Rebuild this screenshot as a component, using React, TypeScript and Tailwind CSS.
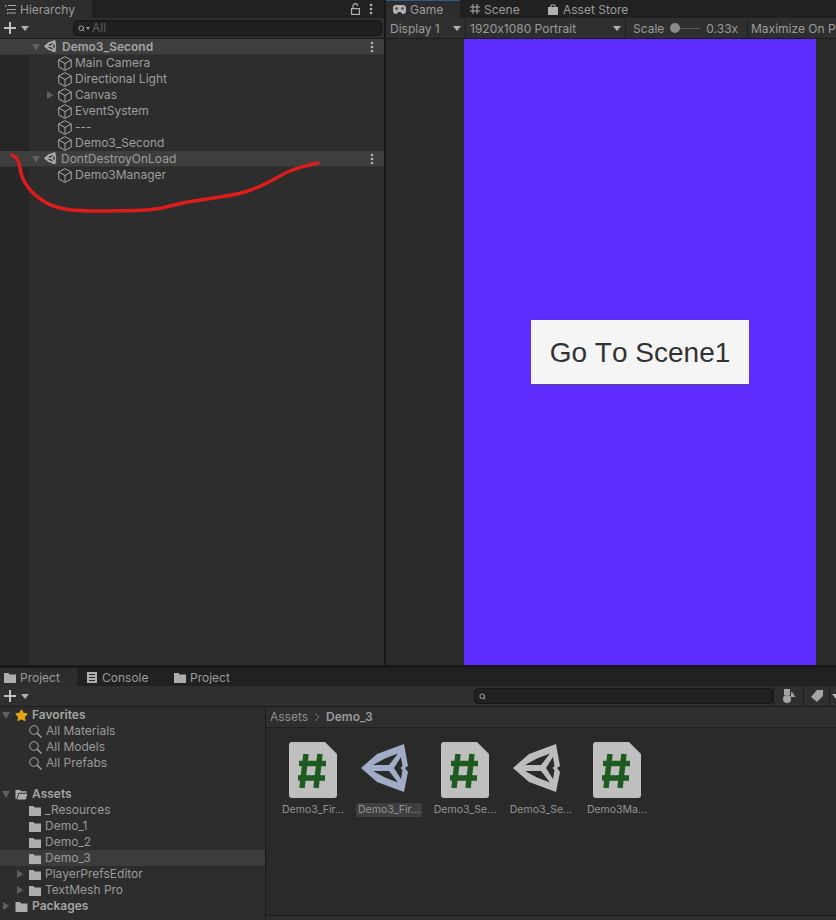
import { Search, Star } from 'lucide-react';

function Caret({ dir = 'down', className = '' }: { dir?: 'down' | 'right'; className?: string }) {
  return (
    <svg width="10" height="10" viewBox="0 0 10 10" className={`shrink-0 ${className}`}>
      {dir === 'down' ? <path d="M1 2h8L5 9z" fill="#5f5f5f" /> : <path d="M2 1l6.5 4L2 9z" fill="#5f5f5f" />}
    </svg>
  );
}

function DropArrow({ className = '' }: { className?: string }) {
  return (
    <svg width="8" height="5" viewBox="0 0 8 5" className={`shrink-0 ${className}`}>
      <path d="M0 0h8L4 5z" fill="#b0b0b0" />
    </svg>
  );
}

function Cube() {
  return (
    <svg width="14" height="15" viewBox="0 0 14 15" fill="none" stroke="#a6a6a6" strokeWidth="1" className="shrink-0">
      <path d="M7 .7l6.300 3.300v7L7 14.300.7 11V4zM.7 4L7 7.500 13.300 4M7 7.500v6.800" />
    </svg>
  );
}

function UnityLogo({ size, color }: { size: number; color: string }) {
  return (
    <svg width={size} height={(size * 48) / 50} viewBox="0 0 50 48" className="shrink-0">
      <path
        fillRule="evenodd"
        fill={color}
        d="M0 24L16 10 43 0l4 22-3 2 3 4-4 20-27-10zM12 21h16l9-11.500-13 5zM40 13l-7 11 7 11 1.500-9-2-2 2-2zM12 27l12 6.500 13 5L28 27z"
      />
    </svg>
  );
}

function Kebab() {
  return (
    <svg width="4" height="12" viewBox="0 0 4 12" fill="#b0b0b0" className="shrink-0">
      <circle cx="2" cy="2" r="1.3" />
      <circle cx="2" cy="6" r="1.3" />
      <circle cx="2" cy="10" r="1.3" />
    </svg>
  );
}

function Folder({ open = false, w = 12 }: { open?: boolean; w?: number }) {
  return (
    <svg width={w} height="11" viewBox="0 0 12 11" className="shrink-0">
      {open ? (
        <path d="M0 1h4.500l1 1.300H11v1.500H3L1 10H0zM3.600 4.800H12L10.300 10.500H1.600z" fill="#adadad" />
      ) : (
        <path d="M0 1h4.500l1.200 1.500H12V11H0z" fill="#adadad" />
      )}
    </svg>
  );
}

function Glass() {
  return (
    <svg width="13" height="13" viewBox="0 0 13 13" fill="none" stroke="#a8a8a8" className="shrink-0">
      <circle cx="5" cy="5" r="4.300" />
      <path d="M8 8l4.500 4.500" strokeWidth="1.300" />
    </svg>
  );
}

function PlusMenu() {
  return (
    <div className="flex items-center pl-1 gap-[5px]">
      <svg width="12" height="12" viewBox="0 0 12 12" fill="#c0c0c0">
        <path d="M5 0h2v5h5v2H7v5H5V7H0V5h5z" />
      </svg>
      <DropArrow />
    </div>
  );
}

function SearchField({
  children,
  className = '',
  menu = false,
}: {
  children?: React.ReactNode;
  className?: string;
  menu?: boolean;
}) {
  return (
    <div className={`h-[16px] rounded-[4px] bg-[#202020] border border-[#161616] flex items-center ${className}`}>
      <Search size={7} strokeWidth={3} color="#b4b4b4" className="ml-[4px]" />
      {menu && (
        <svg width="4" height="3" viewBox="0 0 4 3" className="ml-[1px]">
          <path d="M0 0h4L2 3z" fill="#9a9a9a" />
        </svg>
      )}
      {children}
    </div>
  );
}

function SceneRow({ name, bold = false }: { name: string; bold?: boolean }) {
  return (
    <div className="h-[16px] bg-[#3e3e3e] flex items-center pl-[31px] pr-[10px] border-b border-[#333]">
      <Caret />
      <span className="ml-[3px]">
        <UnityLogo size={13} color="#b0b0b0" />
      </span>
      <span className={`${bold ? 'ml-[5px] font-semibold text-[#a4a4a4]' : 'ml-[4px] text-[#9c9c9c]'}`}>{name}</span>
      <span className="ml-auto">
        <Kebab />
      </span>
    </div>
  );
}

function ObjectRow({ name, arrow = false }: { name: string; arrow?: boolean }) {
  return (
    <div className="h-[16px] flex items-center pl-[58px] relative text-[#9e9e9e]">
      {arrow && (
        <span className="absolute left-[45px]">
          <Caret dir="right" />
        </span>
      )}
      <Cube />
      <span className="ml-[3px]">{name}</span>
    </div>
  );
}

function Tab({
  label,
  icon,
  active = false,
  width,
}: {
  label: string;
  icon: React.ReactNode;
  active?: boolean;
  width: string;
}) {
  return (
    <div className={`h-[18px] flex items-center gap-[4px] pl-[4px] text-[#9c9c9c] ${width} ${active ? 'bg-[#2d2d2d]' : ''}`}>
      {icon}
      <span className="mt-[2px]">{label}</span>
    </div>
  );
}

function TreeRow({
  label,
  indent,
  icon,
  bold = false,
  caret,
  active = false,
}: {
  label: string;
  indent: string;
  icon: React.ReactNode;
  bold?: boolean;
  caret?: 'down' | 'right';
  active?: boolean;
}) {
  return (
    <div className={`h-[16px] flex items-center relative ${indent} ${active ? 'bg-[#3c3c3c]' : ''}`}>
      {caret && (
        <span className={`absolute ${bold ? 'left-[1px]' : 'left-[15px]'}`}>
          <Caret dir={caret} />
        </span>
      )}
      {icon}
      <span className={`${bold ? 'ml-[4px] font-semibold text-[#a4a4a4]' : 'ml-[4px] text-[#9a9a9a]'}`}>{label}</span>
    </div>
  );
}

function ScriptIcon() {
  return (
    <svg width="48" height="56" viewBox="0 0 48 56">
      <path d="M3 0h33l12 12v41a3 3 0 0 1-3 3H3a3 3 0 0 1-3-3V3a3 3 0 0 1 3-3z" fill="#bfbfbf" />
      <path d="M17 12l-4 34M31 12l-4 34M10 21.500h27M9 36h27" stroke="#1f5b21" strokeWidth="5.500" fill="none" />
    </svg>
  );
}

function AssetCell({ label, icon, selected = false }: { label: string; icon: React.ReactNode; selected?: boolean }) {
  return (
    <div className="w-[76px] flex flex-col items-center">
      <div className="h-[56px] flex items-center justify-center">{icon}</div>
      <div className={`mt-[5px] h-[14px] px-[2px] rounded-[2px] flex items-center text-[10.500px] text-[#949494] ${selected ? 'bg-[#3f3f3f]' : ''}`}>
        {label}
      </div>
    </div>
  );
}

function SceneAsset({ color }: { color: string }) {
  return (
    <div className="pr-[7px] pb-[4px]">
      <UnityLogo size={50} color={color} />
    </div>
  );
}

const gameTabIcon = (
  <svg width="13" height="9" viewBox="0 0 13 9" className="ml-[3px]">
    <path d="M3 0h7a3 3 0 0 1 3 3v3.500a2.500 2.500 0 0 1-4.500 1.500L7.500 7h-2L4.500 8A2.500 2.500 0 0 1 0 6.500V3a3 3 0 0 1 3-3z" fill="#b0b0b0" />
    <circle cx="3.500" cy="3.500" r="1.200" fill="#3a3a3a" />
    <circle cx="9.500" cy="3.500" r="1.200" fill="#3a3a3a" />
  </svg>
);

export default function App() {
  return (
    <div className="relative w-[836px] h-[920px] overflow-hidden bg-[#181818] flex flex-col text-[12px] leading-[16px] font-['Inter',sans-serif] [font-feature-settings:'calt'_0]">
      <div className="h-[665px] flex gap-[2px] shrink-0">
        {/* hierarchy */}
        <div className="w-[384px] shrink-0 flex flex-col">
          <div className="h-[18px] bg-[#212121] flex items-center shrink-0">
            <Tab
              width="w-[92px]"
              active
              label="Hierarchy"
              icon={
                <svg width="11" height="9" viewBox="0 0 11 9" fill="#a4a4a4" className="ml-[1px]">
                  <path d="M0 0h1.500v1.500H0zM3 0h8v1H3zM2 4h1.500v1.500H2zM4 4h7v1H4zM2 7.500h1.500V9H2zM4 7.500h7v1H4z" />
                </svg>
              }
            />
            <div className="ml-auto flex items-center gap-[9px] pr-[11px]">
              <svg width="9" height="12" viewBox="0 0 9 12" fill="none" stroke="#b0b0b0" strokeWidth="1.200">
                <path d="M2 5.500V3a2.300 2.300 0 0 1 4.600 0" />
                <rect x="0.600" y="5.600" width="7.800" height="5.800" />
              </svg>
              <Kebab />
            </div>
          </div>
          <div className="h-[21px] bg-[#2f2f2f] border-b border-[#1c1c1c] flex items-center shrink-0">
            <PlusMenu />
            <SearchField menu className="ml-[44px] w-[309px]">
              <span className="ml-[2px] text-[#5e5e5e]">All</span>
            </SearchField>
          </div>
          <div className="flex-1 bg-[linear-gradient(to_right,#262626_29px,#2d2d2d_29px)]">
            <SceneRow name="Demo3_Second" bold />
            <ObjectRow name="Main Camera" />
            <ObjectRow name="Directional Light" />
            <ObjectRow name="Canvas" arrow />
            <ObjectRow name="EventSystem" />
            <ObjectRow name="---" />
            <ObjectRow name="Demo3_Second" />
            <SceneRow name="DontDestroyOnLoad" />
            <ObjectRow name="Demo3Manager" />
          </div>
        </div>

        {/* game view, runs past the right edge of the window */}
        <div className="w-[508px] shrink-0 flex flex-col">
          <div className="h-[18px] bg-[#212121] flex items-center shrink-0">
            <div className="relative">
              <Tab width="w-[74px]" active label="Game" icon={gameTabIcon} />
              <div className="absolute top-0 inset-x-0 h-[1px] bg-[#2c5d87]" />
            </div>
            <Tab
              width="w-[84px] pl-[10px]"
              label="Scene"
              icon={
                <svg width="10" height="10" viewBox="0 0 10 10" stroke="#b0b0b0" fill="none">
                  <path d="M3 0v10M7 0v10M0 3h10M0 7h10" />
                </svg>
              }
            />
            <Tab
              width="flex-1"
              label="Asset Store"
              icon={
                <svg width="10" height="11" viewBox="0 0 10 11" className="mr-[1px]">
                  <path d="M0 3h10v8H0z" fill="#b0b0b0" />
                  <path d="M3 3V1h4v2" fill="none" stroke="#b0b0b0" />
                </svg>
              }
            />
          </div>
          <div className="h-[21px] bg-[#2f2f2f] border-b border-[#1c1c1c] flex items-stretch shrink-0 text-[#9c9c9c] whitespace-nowrap overflow-hidden">
            <div className="w-[80px] pl-[4px] pr-[4px] flex items-center justify-between border-r border-[#1e1e1e]">
              <span className="mt-[2px]">Display 1</span>
              <DropArrow />
            </div>
            <div className="w-[160px] pl-[4px] pr-[4px] flex items-center justify-between border-r border-[#1e1e1e]">
              <span className="mt-[2px]">1920x1080 Portrait</span>
              <DropArrow />
            </div>
            <div className="w-[122px] pl-[7px] flex items-center border-r border-[#1e1e1e]">
              <span className="mt-[2px]">Scale</span>
              <div className="ml-[6px] w-[30px] h-[1px] bg-[#5a5a5a] relative">
                <div className="absolute left-0 -top-[5px] w-[10px] h-[10px] rounded-full bg-[#8a8a8a]" />
              </div>
              <span className="ml-[6px] mt-[2px]">0.33x</span>
            </div>
            <div className="pl-[3px] pt-[2px] flex items-center">Maximize On Play</div>
          </div>
          <div className="flex-1 bg-[#2b2b2b] flex justify-center">
            <div className="w-[352px] bg-[#5f2cff] flex items-center justify-center">
              <div className="w-[218px] h-[64px] pt-[2px] bg-[#f5f5f5] shadow-[0_1px_0_#5a4a9a] flex items-center justify-center font-['Liberation_Sans',sans-serif] text-[28px] text-[#323232] [font-kerning:none]">
                Go To Scene1
              </div>
            </div>
          </div>
        </div>
      </div>

      {/* project */}
      <div className="flex-1 mt-[3px] flex flex-col min-h-0">
        <div className="h-[18px] bg-[#212121] flex items-center shrink-0">
          <Tab width="w-[77px]" active label="Project" icon={<Folder />} />
          <Tab
            width="w-[87px] pl-[10px]"
            label="Console"
            icon={
              <svg width="10" height="11" viewBox="0 0 10 11" className="mr-[1px]">
                <path d="M0 0h10v11H0z" fill="#b0b0b0" />
                <path d="M2 2.500h6M2 5.500h6M2 8.500h6" stroke="#2a2a2a" />
              </svg>
            }
          />
          <Tab width="w-[80px] pl-[10px]" label="Project" icon={<Folder />} />
        </div>
        <div className="h-[21px] bg-[#2f2f2f] border-b border-[#1c1c1c] flex items-center shrink-0">
          <PlusMenu />
          <SearchField className="ml-[445px] w-[300px]" />
          <div className="ml-auto h-full flex items-center">
            <div className="w-[30px] h-full border-l border-[#1e1e1e] flex items-center justify-center">
              <svg width="14" height="14" viewBox="0 0 14 14" fill="#a4a4a4">
                <rect x="2" y="0" width="6" height="6" />
                <path d="M9.500 2l4 6h-5z" />
                <circle cx="5" cy="10" r="4" />
              </svg>
            </div>
            <div className="w-[26px] h-full border-l border-[#1e1e1e] flex items-center justify-center">
              <svg width="12" height="12" viewBox="0 0 12 12" fill="#a4a4a4">
                <path d="M6 0h6v6l-6 6-6-5z" />
              </svg>
            </div>
            <div className="w-[7px] h-full border-l border-[#1e1e1e] flex items-center pl-[2px]">
              <DropArrow />
            </div>
          </div>
        </div>
        <div className="flex-1 flex min-h-0">
          <div className="w-[265px] bg-[#2d2d2d]">
            <TreeRow label="Favorites" bold indent="pl-[15px]" caret="down" icon={<Star size={13} fill="#e3a70f" color="#e3a70f" className="shrink-0" />} />
            {['All Materials', 'All Models', 'All Prefabs'].map((t) => (
              <TreeRow key={t} label={t} indent="pl-[29px]" icon={<Glass />} />
            ))}
            <div className="h-[15px]" />
            <TreeRow label="Assets" bold indent="pl-[15px]" caret="down" icon={<Folder open w={13} />} />
            <TreeRow label="_Resources" indent="pl-[29px]" icon={<Folder />} />
            <TreeRow label="Demo_1" indent="pl-[29px]" icon={<Folder />} />
            <TreeRow label="Demo_2" indent="pl-[29px]" icon={<Folder />} />
            <TreeRow label="Demo_3" indent="pl-[29px]" icon={<Folder />} active />
            <TreeRow label="PlayerPrefsEditor" indent="pl-[29px]" caret="right" icon={<Folder />} />
            <TreeRow label="TextMesh Pro" indent="pl-[29px]" caret="right" icon={<Folder />} />
            <TreeRow label="Packages" bold indent="pl-[15px]" caret="right" icon={<Folder w={13} />} />
          </div>
          <div className="w-px bg-[#1a1a1a]" />
          <div className="flex-1 flex flex-col bg-[#2a2a2a]">
            <div className="h-[21px] bg-[#2f2f2f] border-b border-[#222] flex items-center pl-[4px] text-[#8e8e8e] shrink-0">
              <span>Assets</span>
              <svg width="8" height="10" viewBox="0 0 8 10" fill="none" stroke="#777" className="mx-[5px]">
                <path d="M2 1l4 4-4 4" />
              </svg>
              <span className="font-semibold text-[#9c9c9c]">Demo_3</span>
            </div>
            <div className="flex-1 flex pt-[14px] pl-[9px]">
              <AssetCell label="Demo3_Fir..." icon={<ScriptIcon />} />
              <AssetCell label="Demo3_Fir..." icon={<SceneAsset color="#a1adc6" />} selected />
              <AssetCell label="Demo3_Se..." icon={<ScriptIcon />} />
              <AssetCell label="Demo3_Se..." icon={<SceneAsset color="#bdbdbd" />} />
              <AssetCell label="Demo3Ma..." icon={<ScriptIcon />} />
            </div>
            <div className="h-[5px] bg-[#2f2f2f] border-t border-[#1e1e1e] shrink-0" />
          </div>
        </div>
      </div>

      {/* red pen mark on top of the screenshot */}
      <svg className="absolute inset-0 pointer-events-none" width="836" height="920" fill="none">
        <path
          d="M12 155C17 157 19 161 20 168C22 182 30 193 45 202C58 210 75 211 100 211C125 210 150 212 170 206C195 199 225 198 245 192C265 186 278 176 290 171C300 167 308 165 318 163"
          stroke="#df1c1c"
          strokeWidth="3.500"
          strokeLinecap="round"
        />
      </svg>
    </div>
  );
}
